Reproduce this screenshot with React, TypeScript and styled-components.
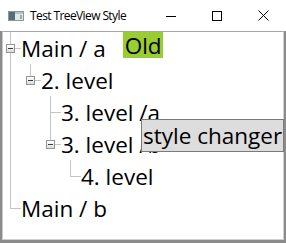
import React from 'react';
import styled, { createGlobalStyle } from 'styled-components';

type TreeNode = {
  label: string;
  tag?: string;
  children?: TreeNode[];
};

const TREE: TreeNode[] = [
  {
    label: 'Main / a',
    tag: 'Old',
    children: [
      {
        label: '2. level',
        children: [
          { label: '3. level /a' },
          { label: '3. level /b', children: [{ label: '4. level' }] },
        ],
      },
    ],
  },
  { label: 'Main / b' },
];

const LINE = '#c4c4c4';

const GlobalStyle = createGlobalStyle`
  html, body {
    margin: 0;
    padding: 0;
    background: #fff;
  }
  #root {
    width: 286px;
    height: 243px;
  }
`;

const TreeItem: React.FC<{ node: TreeNode; last: boolean }> = ({ node, last }) => {
  const hasChildren = !!node.children && node.children.length > 0;
  return (
    <div>
      <Row>
        <Gutter $last={last}>
          {hasChildren && (
            <Expander>
              <Minus />
            </Expander>
          )}
        </Gutter>
        <Label>{node.label}</Label>
        {node.tag && <Tag>{node.tag}</Tag>}
      </Row>
      {hasChildren && (
        <Children $last={last}>
          {node.children!.map((child, i) => (
            <TreeItem key={child.label} node={child} last={i === node.children!.length - 1} />
          ))}
        </Children>
      )}
    </div>
  );
};

const App: React.FC = () => {
  return (
    <Window>
      <GlobalStyle />
      <TitleBar>
        <AppIcon width="16" height="16" viewBox="0 0 16 16">
          <rect x="0.5" y="3.5" width="15" height="9" fill="#e4e7e7" stroke="#8d9799" />
          <rect x="1" y="4" width="6" height="8" fill="#4f7078" />
          <rect x="7" y="4" width="8" height="2" fill="#b9c3c5" />
          <rect x="12" y="7" width="2" height="4" fill="#9aa6a8" />
        </AppIcon>
        <Title>Test TreeView Style</Title>
        <CaptionButton>
          <svg width="10" height="10" viewBox="0 0 10 10">
            <line x1="0" y1="5.5" x2="10" y2="5.5" stroke="#000" strokeWidth="1" />
          </svg>
        </CaptionButton>
        <CaptionButton>
          <svg width="10" height="10" viewBox="0 0 10 10">
            <rect x="0.5" y="0.5" width="9" height="9" fill="none" stroke="#000" strokeWidth="1" />
          </svg>
        </CaptionButton>
        <CaptionButton>
          <svg width="11" height="11" viewBox="0 0 11 11">
            <path d="M0.5 0.5 L10.5 10.5 M10.5 0.5 L0.5 10.5" stroke="#000" strokeWidth="1" fill="none" />
          </svg>
        </CaptionButton>
      </TitleBar>
      <Frame>
        <Tree>
          {TREE.map((node, i) => (
            <TreeItem key={node.label} node={node} last={i === TREE.length - 1} />
          ))}
        </Tree>
      </Frame>
      <StyleButton>style changer</StyleButton>
    </Window>
  );
};

const Window = styled.div`
  position: relative;
  width: 286px;
  height: 243px;
  display: flex;
  flex-direction: column;
  overflow: hidden;
  font-family: 'Open Sans', 'Noto Sans', sans-serif;
  color: #000;
`;

const TitleBar = styled.div`
  flex: none;
  height: 31px;
  display: flex;
  align-items: center;
  background: #fff;
`;

const AppIcon = styled.svg`
  flex: none;
  margin-left: 8px;
  margin-top: 1px;
`;

const Title = styled.div`
  flex: 1;
  margin-left: 6px;
  font-size: 12px;
  letter-spacing: -0.6px;
  line-height: 16px;
  padding-top: 1px;
  white-space: nowrap;
`;

const CaptionButton = styled.div`
  flex: none;
  width: 46px;
  height: 31px;
  display: flex;
  align-items: center;
  justify-content: center;
`;

const Frame = styled.div`
  flex: 1;
  display: flex;
  border-left: 2px solid #8b8b8b;
  border-right: 2px solid #8b8b8b;
  border-bottom: 3px solid #8b8b8b;
`;

const Tree = styled.div`
  flex: 1;
  border: 1px solid #a6a6a6;
  border-left-color: #c8c8c8;
  border-right-color: #d0d0d0;
  border-bottom-color: #d0d0d0;
  overflow: hidden;
  background: #fff;
`;

const Row = styled.div`
  display: flex;
  height: 32px;
`;

const Gutter = styled.div<{ $last: boolean }>`
  flex: none;
  width: 18px;
  box-sizing: border-box;
  padding-left: 3px;
  display: flex;
  align-items: center;
  background-image: linear-gradient(${LINE}, ${LINE}), linear-gradient(${LINE}, ${LINE});
  background-repeat: no-repeat;
  background-size: 1px ${(p) => (p.$last ? '16px' : '100%')}, 11px 1px;
  background-position: 7px 0, 7px 16px;
`;

const Expander = styled.span`
  width: 9px;
  height: 9px;
  box-sizing: border-box;
  border: 1px solid #949494;
  background: linear-gradient(#ffffff, #dcdcdc);
  display: flex;
  align-items: center;
  justify-content: center;
`;

const Minus = styled.span`
  width: 5px;
  height: 1px;
  background: #3c3c3c;
`;

const Label = styled.span`
  font-size: 22.5px;
  line-height: 30px;
  padding-top: 2px;
  white-space: nowrap;
`;

const Tag = styled.span`
  align-self: flex-start;
  margin-left: 17px;
  height: 26px;
  box-sizing: border-box;
  padding: 2px 1px 0 2px;
  font-size: 22.5px;
  line-height: 24px;
  background: #9acd32;
`;

const Children = styled.div<{ $last: boolean }>`
  padding-left: 20px;
  background-image: ${(p) => (p.$last ? 'none' : `linear-gradient(${LINE}, ${LINE})`)};
  background-repeat: no-repeat;
  background-size: 1px 100%;
  background-position: 7px 0;
`;

const StyleButton = styled.button`
  position: absolute;
  left: 141px;
  top: 119px;
  width: 143px;
  height: 33px;
  box-sizing: border-box;
  margin: 0;
  padding: 0 1px;
  border: 1px solid #7a7a7a;
  background: #dddddd;
  font-family: 'Open Sans', 'Noto Sans', sans-serif;
  font-size: 22.5px;
  line-height: 31px;
  text-align: left;
  color: #000;
  white-space: nowrap;
  overflow: hidden;
`;

export default App;
